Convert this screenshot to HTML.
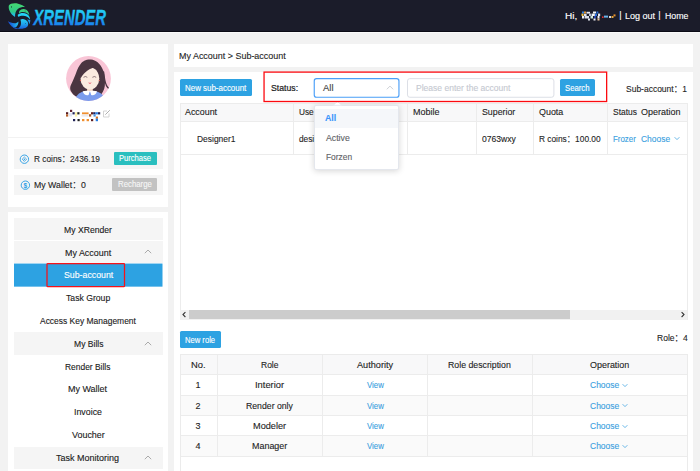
<!DOCTYPE html>
<html><head><meta charset="utf-8"><title>XRender - Sub-account</title>
<style>
*{box-sizing:border-box;margin:0;padding:0}
html,body{width:700px;height:471px;overflow:hidden;background:#f2f2f2;font-family:"Liberation Sans","Noto Sans CJK SC",sans-serif;color:#222;font-size:9px}
.a{position:absolute;white-space:nowrap}
.t{position:absolute;white-space:nowrap;line-height:12px;height:12px;-webkit-text-stroke:0.12px currentColor}
.c{text-align:center}
#hdr{left:0;top:0;width:700px;height:32px;background:#1b1c2a}
.panel{background:#fff}
.btn{background:#2da2e2;color:#fff;border-radius:1.5px;text-align:center}
.mi{left:14px;width:148.5px;height:22.2px;background:#f5f5f5;margin-top:-0.2px}
.ml{left:14px;width:148.5px;text-align:center;font-size:9.2px;color:#1a1a1a}
.th{background:#f8f8f9}
.ln{background:#ececec}
.lk{color:#3aa0e0}
.cn{font-family:"Noto Sans CJK SC",sans-serif}
</style></head><body>

<!-- header -->
<div class="a" id="hdr"></div>
<div class="a" style="left:0;top:30.8px;width:700px;height:1.2px;background:#0b0b15"></div>
<div class="a" style="left:0;top:32px;width:700px;height:1px;background:#fafafa"></div>
<svg class="a" style="left:6px;top:1px" width="26" height="30" viewBox="0 0 408 471">
 <defs>
  <linearGradient id="g1" x1="0" y1="40" x2="0" y2="255" gradientUnits="userSpaceOnUse"><stop offset="0" stop-color="#44d872"/><stop offset="0.6" stop-color="#2fc888"/><stop offset="0.8" stop-color="#22c0d8"/><stop offset="1" stop-color="#1eb0ee"/></linearGradient>
  <linearGradient id="g2" x1="0" y1="275" x2="0" y2="440" gradientUnits="userSpaceOnUse"><stop offset="0" stop-color="#2ad6f4"/><stop offset="0.5" stop-color="#1fa6ec"/><stop offset="1" stop-color="#1a5cdc"/></linearGradient>
  <linearGradient id="g4" x1="30" y1="0" x2="200" y2="0" gradientUnits="userSpaceOnUse"><stop offset="0" stop-color="#1846d2"/><stop offset="0.5" stop-color="#1c84e4"/><stop offset="1" stop-color="#25c8f0"/></linearGradient>
  <linearGradient id="g5" x1="0" y1="120" x2="0" y2="225" gradientUnits="userSpaceOnUse"><stop offset="0" stop-color="#40d47a"/><stop offset="1" stop-color="#2cc890"/></linearGradient>
 </defs>
 <path d="M45,72 C62,40 130,28 190,42 C240,54 280,75 302,98 C268,92 222,100 185,125 C155,150 140,195 142,250 C105,228 68,190 52,145 C42,118 40,92 45,72Z" fill="url(#g1)"/>
 <ellipse cx="86" cy="93" rx="8" ry="11" fill="#1a2430"/>
 <path d="M212,155 C232,128 280,112 318,138 C345,158 362,188 366,222 C335,185 290,168 250,174 C232,177 218,184 205,195 C204,180 206,166 212,155Z" fill="url(#g5)"/>
 <circle cx="300" cy="156" r="7" fill="#1d4a3c"/>
 <path d="M186,215 C215,190 275,180 328,203 C358,218 376,250 379,292 C352,252 312,232 268,230 C238,229 212,236 192,248 C184,236 183,225 186,215Z" fill="#23d2f5"/>
 <path d="M381,300 C383,322 378,345 366,364 C362,338 350,312 330,290 C348,290 366,294 381,300Z" fill="#1c96e8"/>
 <path d="M226,290 C262,272 310,285 337,320 C356,350 352,392 322,414 C290,436 235,444 188,432 C220,412 236,380 236,345 C236,325 232,306 226,290Z" fill="url(#g2)"/>
 <circle cx="305" cy="352" r="7" fill="#1b2c4c"/>
 <path d="M30,315 C55,335 95,350 135,350 C160,350 180,340 194,322 C198,350 186,385 160,408 C145,418 134,420 122,416 C80,395 45,360 30,315Z" fill="url(#g4)"/>
 <path d="M75,378 C112,412 165,434 222,438 C195,444 158,440 128,426 C104,414 86,398 75,378Z" fill="#1958da"/>
</svg>
<svg class="a" style="left:30px;top:4px" width="82" height="26" viewBox="0 0 82 26">
 <defs><linearGradient id="g3" x1="0" y1="5.6" x2="0" y2="20.7" gradientUnits="userSpaceOnUse"><stop offset="0" stop-color="#25cef5"/><stop offset="0.55" stop-color="#1ab8f2"/><stop offset="0.72" stop-color="#1a98f0"/><stop offset="1" stop-color="#1b86ee"/></linearGradient></defs>
 <text x="3.4" y="20.7" font-family="Liberation Sans, sans-serif" font-weight="bold" font-style="italic" font-size="21.2" textLength="72.6" lengthAdjust="spacingAndGlyphs" fill="url(#g3)" stroke="url(#g3)" stroke-width="0.35">XRENDER</text>
</svg>


<!-- header mosaic name -->
<svg class="a" style="left:580px;top:10px" width="37" height="12" viewBox="580 10 37 12">
<rect x="582" y="11.5" width="2" height="2" fill="#2d7fe0"/><rect x="584" y="11.5" width="2" height="2" fill="#e8962e"/>
<rect x="586.5" y="11.8" width="3.5" height="1.8" fill="#e9ecf4"/><rect x="593" y="11.5" width="3" height="2" fill="#f2f2f6"/><rect x="596.5" y="11.5" width="1.8" height="2" fill="#2a6fdc"/>
<rect x="581.5" y="13.6" width="2" height="2.4" fill="#f0c040"/><rect x="584" y="13.8" width="2.6" height="2.2" fill="#dfe3ee"/><rect x="589" y="13.6" width="2.6" height="2.4" fill="#b9c0d0"/>
<rect x="592" y="13.6" width="2.8" height="2.4" fill="#f4f4f8"/><rect x="595" y="13.6" width="2" height="2.4" fill="#2d6fd8"/><rect x="598" y="13.6" width="2.2" height="2.4" fill="#e6e8f0"/>
<rect x="582" y="16" width="2.4" height="2.5" fill="#eceef4"/><rect x="585" y="16" width="4" height="2.5" fill="#d9dde8"/><rect x="590.5" y="16" width="2.5" height="2.5" fill="#cfe8dc"/>
<rect x="594" y="16" width="2" height="2.5" fill="#2440a8"/><rect x="597.5" y="16" width="2" height="2.5" fill="#eef0f6"/>
<rect x="602" y="16.4" width="1.6" height="1.6" fill="#e03030"/><rect x="604" y="15.6" width="4" height="2" fill="#6ab4ea"/><rect x="609" y="16" width="2" height="2" fill="#d8d8e0"/>
<rect x="611.5" y="16" width="2" height="2" fill="#e8a83a"/><rect x="613.5" y="14.4" width="2" height="2" fill="#e8902a"/>
<rect x="588" y="18.5" width="2" height="2" fill="#e8eaf2"/><rect x="593.5" y="18.5" width="2" height="2" fill="#f0f0f6"/><rect x="597.5" y="18.5" width="2" height="2" fill="#efc8a0"/>
</svg>
<!-- sidebar cards -->
<div class="a panel" style="left:8.3px;top:44px;width:160.1px;height:92.7px"></div>
<div class="a panel" style="left:8.3px;top:138px;width:160.1px;height:68.7px"></div>
<div class="a panel" style="left:8.3px;top:212.4px;width:160.1px;height:260px"></div>


<!-- avatar -->
<svg class="a" style="left:65.8px;top:55.6px" width="45" height="45" viewBox="0 0 45 45">
 <defs><clipPath id="cp"><circle cx="22.5" cy="22.5" r="22.4"/></clipPath></defs>
 <circle cx="22.5" cy="22.5" r="22.4" fill="#f9c5d6"/>
 <g clip-path="url(#cp)">
  <path d="M25 3.4 C19.5 3.2 16.5 5.5 15 7.4 C12.5 10.5 11.5 13 10.6 15.5 C9.5 18.8 8.6 21 7.2 24 C6 27 4.8 28.8 4.3 30.8 C4 32.5 4.3 34 5 35.2 C6 37.3 7.8 39 10 40.6 L34 40 C36.2 37.5 38.3 34 38.8 30 C39.4 25 38.8 19 37.2 14.5 C35.8 10.8 34 8.4 31.6 6.3 C29.6 4.6 27.6 3.6 25 3.4Z" fill="#4a3541"/>
  <path d="M37.6 16 C38.2 22 39 26.5 40.5 29.6 C41.5 31.6 42.6 32.7 44 33.4" stroke="#4a3541" stroke-width="1.3" fill="none" stroke-linecap="round"/>
  <path d="M21.1 30 H26.8 V36.5 H21.1Z" fill="#f4d6c3"/>
  <ellipse cx="23.9" cy="22.4" rx="9.4" ry="11" fill="#fbebe0"/>
  <path d="M28.6 11.3 C24.5 12.4 18.8 14.8 14.4 22.8 C13.3 17 16 12 21 10.3 C24 9.6 27 10.2 28.6 11.3Z M28.6 11.3 C31 13.2 32.8 16.5 33.4 21.5 C34 17 32.6 13 30 11Z" fill="#4a3541"/>
  <path d="M8.8 45 C9.6 40 13 36.6 17.5 35.6 L30.5 35.6 C35 36.6 38.6 40 39.4 45Z" fill="#7b9ced"/>
  <path d="M16.7 35.3 C18.5 34.6 21 34.4 23.9 35 L22.6 39 C20.2 39.8 17.5 38.5 16.7 35.3Z M31 35.3 C29.2 34.6 26.8 34.4 23.9 35 L25.2 39 C27.6 39.8 30.2 38.5 31 35.3Z" fill="#fff"/>
  <path d="M17.5 21.3 q1.9 -1.6 3.8 0 M26.4 21.3 q1.9 -1.6 3.8 0" stroke="#5a4048" stroke-width="0.65" fill="none"/>
  <path d="M22.2 26.6 q1.7 2.4 3.5 0 q-1.7 0.5 -3.5 0Z" fill="#ea4e62"/>
  <circle cx="14.5" cy="24.6" r="0.7" fill="#ea6a5a"/><circle cx="33.3" cy="24.6" r="0.7" fill="#ea6a5a"/>
 </g>
</svg>
<!-- mosaic name -->
<svg class="a" style="left:64px;top:108px" width="50" height="15" viewBox="64 108 50 15">
 <g opacity="0.95">
 <rect x="70" y="109.8" width="2.2" height="2.2" fill="#5a1620"/>
 <rect x="66" y="112.2" width="2.2" height="2.2" fill="#4a1018"/><rect x="66" y="114.4" width="2.2" height="2.2" fill="#b5581c"/>
 <rect x="69" y="113" width="3" height="3.4" fill="#dfe3f4"/>
 <rect x="72.5" y="112.2" width="2.2" height="2.2" fill="#15184e"/>
 <rect x="75" y="112.2" width="2.2" height="4.4" fill="#fdf3a8"/>
 <rect x="77.3" y="112.2" width="2.2" height="2.2" fill="#141414"/>
 <rect x="82" y="112.4" width="6.6" height="1.9" fill="#f08a24"/>
 <rect x="81.5" y="114.6" width="7" height="2" fill="#ece8ea"/>
 <rect x="89" y="114.2" width="2.2" height="2.4" fill="#a7501c"/>
 <rect x="91" y="112.2" width="2.2" height="2.2" fill="#5a1414"/>
 <rect x="93.2" y="112.2" width="2.3" height="2.2" fill="#191a55"/>
 <rect x="95.5" y="112.2" width="2.4" height="2.2" fill="#1d78e0"/>
 <rect x="98" y="112.2" width="2.2" height="2.2" fill="#15164a"/>
 <rect x="93.5" y="114.4" width="2.2" height="2.2" fill="#3b8fe8"/>
 <rect x="95.8" y="116.6" width="2.2" height="2.2" fill="#d46a1c"/>
 <rect x="73" y="119" width="2.2" height="2.2" fill="#15184e"/>
 <rect x="77.5" y="119" width="2.2" height="2.2" fill="#141414"/>
 <rect x="82" y="119" width="2.4" height="2.2" fill="#f08a24"/>
 <rect x="86.6" y="119" width="2.4" height="2.2" fill="#f08a24"/>
 <rect x="91" y="119" width="2.2" height="2.2" fill="#5a1414"/>
 <rect x="95.7" y="118.6" width="2.3" height="2.6" fill="#1d78e0"/>
 </g>
 <path d="M107 111 H103.5 V117 H109 V113.5" stroke="#cfcfcf" stroke-width="0.9" fill="none"/>
 <path d="M105.3 114.7 L109.8 110.2" stroke="#b0b0b0" stroke-width="1"/>
</svg>
<!-- coins rows -->
<div class="a" style="left:14px;top:149px;width:148.7px;height:20px;background:#f5f5f5"></div>
<div class="a" style="left:14px;top:175px;width:148.7px;height:20.3px;background:#f5f5f5"></div>
<svg class="a" style="left:19.1px;top:154.1px" width="11" height="11" viewBox="0 0 11 11"><circle cx="5.4" cy="5.2" r="4.2" fill="none" stroke="#2f9fe4" stroke-width="0.95"/><path d="M5.4 3 L7.6 5.2 L5.4 7.4 L3.2 5.2Z" fill="none" stroke="#2f9fe4" stroke-width="0.8"/><circle cx="5.4" cy="5.2" r="0.7" fill="#2f9fe4"/></svg>
<svg class="a" style="left:19.9px;top:180.1px" width="11" height="11" viewBox="0 0 11 11"><circle cx="5.4" cy="5.2" r="4.2" fill="none" stroke="#2f9fe4" stroke-width="0.95"/><text x="5.4" y="7.6" font-size="6.6" font-weight="bold" font-family="Liberation Sans, sans-serif" text-anchor="middle" fill="#2f9fe4">$</text></svg>
<div class="a" style="left:113.8px;top:152px;width:43px;height:12.8px;background:#2abfbf;border-radius:1px"></div>
<div class="a" style="left:112.4px;top:178.4px;width:44.4px;height:12.4px;background:#c2c2c2;border-radius:1px"></div>
<!-- menu -->
<div class="a mi" style="top:218.4px"></div>
<div class="a mi" style="top:241.2px"></div>
<svg class="a" style="left:144px;top:249.2px" width="8" height="5" viewBox="0 0 8 5"><path d="M0.8 4.2 L4 1 L7.2 4.2" fill="none" stroke="#9c9c9c" stroke-width="0.85"/></svg>
<svg class="a" style="left:14px;top:263px" width="149" height="24" viewBox="0 0 149 24"><rect x="0" y="0.55" width="148.5" height="23.1" fill="#2da2e2"/></svg>
<div class="a mi" style="top:332.6px"></div>
<svg class="a" style="left:144px;top:340.6px" width="8" height="5" viewBox="0 0 8 5"><path d="M0.8 4.2 L4 1 L7.2 4.2" fill="none" stroke="#9c9c9c" stroke-width="0.85"/></svg>
<div class="a mi" style="top:446.7px"></div>
<svg class="a" style="left:144px;top:454.7px" width="8" height="5" viewBox="0 0 8 5"><path d="M0.8 4.2 L4 1 L7.2 4.2" fill="none" stroke="#9c9c9c" stroke-width="0.85"/></svg>

<!-- main panels -->
<div class="a panel" style="left:174px;top:44px;width:519px;height:22.8px"></div>
<div class="a panel" style="left:174px;top:72px;width:519px;height:400px"></div>



<!-- toolbar -->
<div class="a btn" style="left:180px;top:79.2px;width:72px;height:17px"></div>
<svg class="a" style="left:0;top:0" width="700" height="471" viewBox="0 0 700 471"><rect x="314.25" y="78.65" width="84.7" height="18.6" rx="2.3" fill="#fff" stroke="#4a9ff8" stroke-width="1.15"/><rect x="407.5" y="78.65" width="146.4" height="18.6" rx="2.3" fill="#fff" stroke="#dcdfe6" stroke-width="1"/></svg>
<svg class="a" style="left:386px;top:85.3px" width="8" height="5" viewBox="0 0 8 5"><path d="M0.8 4.3 L4 1.1 L7.2 4.3" fill="none" stroke="#c0c4cc" stroke-width="0.8"/></svg>
<div class="a btn" style="left:559.7px;top:79.2px;width:35.3px;height:17.1px"></div>
<!-- table 1 -->
<div class="a" style="left:179.6px;top:102.6px;width:508.2px;height:217px;border:1px solid #ececec;border-bottom:none"></div>
<div class="a th" style="left:180.6px;top:103.6px;width:506.2px;height:17.6px"></div>
<div class="a ln" style="left:180.6px;top:121.1px;width:506.2px;height:0.9px"></div>
<div class="a ln" style="left:180.6px;top:153.6px;width:506.2px;height:0.9px"></div>
<div class="a ln" style="left:293.4px;top:103.6px;width:0.9px;height:50.4px"></div>
<div class="a ln" style="left:407.1px;top:103.6px;width:0.9px;height:50.4px"></div>
<div class="a ln" style="left:476px;top:103.6px;width:0.9px;height:50.4px"></div>
<div class="a ln" style="left:533.1px;top:103.6px;width:0.9px;height:50.4px"></div>
<div class="a ln" style="left:607.1px;top:103.6px;width:0.9px;height:50.4px"></div>
<svg class="a" style="left:672.5px;top:136.3px" width="8" height="5" viewBox="0 0 8 5"><path d="M1.6 1.2 L4 3.6 L6.4 1.2" fill="none" stroke="#3aa0e0" stroke-width="0.75"/></svg>
<!-- scrollbar -->
<div class="a" style="left:180.2px;top:310.1px;width:506.8px;height:9.6px;background:#f1f1f1"></div>
<div class="a" style="left:189.4px;top:310.3px;width:380.8px;height:9px;background:#cccccc"></div>
<svg class="a" style="left:181.2px;top:311.3px" width="6" height="7" viewBox="0 0 6 7"><path d="M4.4 1.2 L2 3.6 L4.4 6" fill="none" stroke="#333" stroke-width="1.1"/></svg>
<svg class="a" style="left:680px;top:311.3px" width="6" height="7" viewBox="0 0 6 7"><path d="M1.6 1.2 L4 3.6 L1.6 6" fill="none" stroke="#333" stroke-width="1.1"/></svg>
<!-- dropdown -->
<div class="a" style="left:313.9px;top:104.7px;width:85.6px;height:65.8px;background:#fff;border:1px solid #e4e7ed;border-radius:2px;box-shadow:0 1px 6px rgba(0,0,0,0.17)"></div>
<div class="a" style="left:315.3px;top:108.6px;width:83px;height:19.2px;background:#f5f7fa"></div>
<svg class="a" style="left:333.2px;top:101.4px" width="9" height="4.4" viewBox="0 0 9 4.4"><path d="M0.3 4.4 L4.5 0.6 L8.7 4.4Z" fill="#fff" stroke="#e6e9f0" stroke-width="0.7"/></svg>
<!-- red annotation -->
<svg class="a" style="left:0;top:0;z-index:6" width="700" height="471" viewBox="0 0 700 471"><rect x="264.05" y="72.1" width="342.6" height="29.4" fill="none" stroke="#fc0a10" stroke-width="1.3"/><rect x="47" y="263.5" width="77.5" height="23.2" rx="0.8" fill="none" stroke="#f5121a" stroke-width="1.25"/></svg>
<!-- role section -->
<div class="a btn" style="left:180px;top:331.2px;width:41px;height:17.1px"></div>
<div class="a" style="left:179.6px;top:354.2px;width:508.2px;height:120px;border:1px solid #ebebeb;border-bottom:none"></div>
<div class="a th" style="left:180.6px;top:355.2px;width:506.2px;height:19.2px"></div>
<div class="a" style="left:180.6px;top:394.8px;width:506.2px;height:20.4px;background:#fafafa"></div>
<div class="a" style="left:180.6px;top:435.7px;width:506.2px;height:20.4px;background:#fafafa"></div>
<div class="a ln" style="left:180.6px;top:374.1px;width:506.2px;height:0.9px"></div>
<div class="a ln" style="left:180.6px;top:394.5px;width:506.2px;height:0.9px"></div>
<div class="a ln" style="left:180.6px;top:414.9px;width:506.2px;height:0.9px"></div>
<div class="a ln" style="left:180.6px;top:435.4px;width:506.2px;height:0.9px"></div>
<div class="a ln" style="left:180.6px;top:455.8px;width:506.2px;height:0.9px"></div>
<div class="a ln" style="left:216.6px;top:355px;width:0.9px;height:101.5px"></div>
<div class="a ln" style="left:322.2px;top:355px;width:0.9px;height:101.5px"></div>
<div class="a ln" style="left:427.2px;top:355px;width:0.9px;height:101.5px"></div>
<div class="a ln" style="left:532.2px;top:355px;width:0.9px;height:101.5px"></div>
<svg class="a" style="left:621.3px;top:382.9px" width="8" height="5" viewBox="0 0 8 5"><path d="M1.6 1.2 L4 3.6 L6.4 1.2" fill="none" stroke="#3aa0e0" stroke-width="0.75"/></svg>
<svg class="a" style="left:621.3px;top:403.3px" width="8" height="5" viewBox="0 0 8 5"><path d="M1.6 1.2 L4 3.6 L6.4 1.2" fill="none" stroke="#3aa0e0" stroke-width="0.75"/></svg>
<svg class="a" style="left:621.3px;top:423.8px" width="8" height="5" viewBox="0 0 8 5"><path d="M1.6 1.2 L4 3.6 L6.4 1.2" fill="none" stroke="#3aa0e0" stroke-width="0.75"/></svg>
<svg class="a" style="left:621.3px;top:444.2px" width="8" height="5" viewBox="0 0 8 5"><path d="M1.6 1.2 L4 3.6 L6.4 1.2" fill="none" stroke="#3aa0e0" stroke-width="0.75"/></svg>
<div class="t" style="left:564.6px;top:9.7px;font-size:9px;color:#fff;transform:scaleX(1.1182);transform-origin:0 50%;">Hi,</div>
<div class="t" style="left:619.2px;top:9.3px;font-size:9px;color:#fff;transform:scaleX(1.0000);transform-origin:0 50%;">|</div>
<div class="t" style="left:625.0px;top:9.7px;font-size:9px;color:#fff;transform:scaleX(1.0023);transform-origin:0 50%;">Log out</div>
<div class="t" style="left:658.2px;top:9.3px;font-size:9px;color:#fff;transform:scaleX(1.0000);transform-origin:0 50%;">|</div>
<div class="t" style="left:664.9px;top:9.7px;font-size:9px;color:#fff;transform:scaleX(0.9785);transform-origin:0 50%;">Home</div>
<div class="t" style="left:179.2px;top:50.0px;font-size:9.6px;color:#1f1f1f;transform:scaleX(0.9328);transform-origin:0 50%;">My Account &gt; Sub-account</div>
<div class="t" style="left:33.6px;top:152.9px;font-size:9px;color:#1f1f1f;transform:scaleX(0.9207);transform-origin:0 50%;">R coins<span class="cn">：</span>2436.19</div>
<div class="t" style="left:33.6px;top:178.9px;font-size:9px;color:#1f1f1f;transform:scaleX(0.9736);transform-origin:0 50%;">My Wallet<span class="cn">：</span>0</div>
<div class="t" style="left:119.3px;top:153.0px;font-size:8.2px;color:#fff;transform:scaleX(0.9279);transform-origin:0 50%;">Purchase</div>
<div class="t" style="left:117.5px;top:179.2px;font-size:8.2px;color:#f6f6f6;transform:scaleX(0.9545);transform-origin:0 50%;">Recharge</div>
<div class="t" style="left:64.4px;top:223.9px;font-size:9.3px;color:#1a1a1a;transform:scaleX(0.9289);transform-origin:0 50%;">My XRender</div>
<div class="t" style="left:65.0px;top:246.7px;font-size:9.3px;color:#1a1a1a;transform:scaleX(0.9612);transform-origin:0 50%;">My Account</div>
<div class="t" style="left:63.5px;top:269.0px;font-size:9.3px;color:#fff;transform:scaleX(0.9425);transform-origin:0 50%;">Sub-account</div>
<div class="t" style="left:66.1px;top:291.8px;font-size:9.3px;color:#1a1a1a;transform:scaleX(0.9296);transform-origin:0 50%;">Task Group</div>
<div class="t" style="left:40.3px;top:315.1px;font-size:9.3px;color:#1a1a1a;transform:scaleX(0.9097);transform-origin:0 50%;">Access Key Management</div>
<div class="t" style="left:73.5px;top:338.2px;font-size:9.3px;color:#1a1a1a;transform:scaleX(0.9210);transform-origin:0 50%;">My Bills</div>
<div class="t" style="left:65.4px;top:360.9px;font-size:9.3px;color:#1a1a1a;transform:scaleX(0.9057);transform-origin:0 50%;">Render Bills</div>
<div class="t" style="left:68.4px;top:383.4px;font-size:9.3px;color:#1a1a1a;transform:scaleX(0.9662);transform-origin:0 50%;">My Wallet</div>
<div class="t" style="left:74.1px;top:405.9px;font-size:9.3px;color:#1a1a1a;transform:scaleX(0.9502);transform-origin:0 50%;">Invoice</div>
<div class="t" style="left:71.7px;top:428.8px;font-size:9.3px;color:#1a1a1a;transform:scaleX(0.9612);transform-origin:0 50%;">Voucher</div>
<div class="t" style="left:56.4px;top:452.0px;font-size:9.3px;color:#1a1a1a;transform:scaleX(0.9691);transform-origin:0 50%;">Task Monitoring</div>
<div class="t" style="left:185.2px;top:81.5px;font-size:8.6px;color:#fff;transform:scaleX(0.9231);transform-origin:0 50%;">New sub-account</div>
<div class="t" style="left:271.2px;top:82.0px;font-size:9.3px;color:#1a1a1a;-webkit-text-stroke:0.2px #1a1a1a;transform:scaleX(0.9360);transform-origin:0 50%;">Status:</div>
<div class="t" style="left:322.6px;top:81.9px;font-size:9px;color:#444;transform:scaleX(1.0484);transform-origin:0 50%;">All</div>
<div class="t" style="left:415.9px;top:81.9px;font-size:9px;color:#c5c9d1;transform:scaleX(0.9490);transform-origin:0 50%;">Please enter the account</div>
<div class="t" style="left:565.3px;top:81.5px;font-size:8.6px;color:#fff;transform:scaleX(0.8996);transform-origin:0 50%;">Search</div>
<div class="t" style="left:625.8px;top:82.4px;font-size:9.2px;color:#1f1f1f;transform:scaleX(0.9240);transform-origin:0 50%;">Sub-account<span class="cn">：</span>1</div>
<div class="t" style="left:184.6px;top:106.0px;font-size:9px;color:#1f1f1f;transform:scaleX(0.9867);transform-origin:0 50%;">Account</div>
<div class="t" style="left:299.2px;top:106.0px;font-size:9px;color:#1f1f1f;transform:scaleX(0.9179);transform-origin:0 50%;">Use</div>
<div class="t" style="left:413.3px;top:106.0px;font-size:9px;color:#1f1f1f;transform:scaleX(0.9994);transform-origin:0 50%;">Mobile</div>
<div class="t" style="left:481.5px;top:106.0px;font-size:9px;color:#1f1f1f;transform:scaleX(0.9785);transform-origin:0 50%;">Superior</div>
<div class="t" style="left:538.5px;top:106.0px;font-size:9px;color:#1f1f1f;transform:scaleX(0.9906);transform-origin:0 50%;">Quota</div>
<div class="t" style="left:612.6px;top:106.0px;font-size:9px;color:#1f1f1f;transform:scaleX(0.9406);transform-origin:0 50%;">Status</div>
<div class="t" style="left:641.3px;top:106.0px;font-size:9px;color:#1f1f1f;transform:scaleX(0.9967);transform-origin:0 50%;">Operation</div>
<div class="t" style="left:197.0px;top:132.5px;font-size:9px;color:#1f1f1f;transform:scaleX(0.9383);transform-origin:0 50%;">Designer1</div>
<div class="t" style="left:299.2px;top:132.5px;font-size:9px;color:#1f1f1f;transform:scaleX(0.9203);transform-origin:0 50%;">desi</div>
<div class="t" style="left:481.5px;top:132.5px;font-size:9px;color:#1f1f1f;transform:scaleX(0.9513);transform-origin:0 50%;">0763wxy</div>
<div class="t" style="left:538.5px;top:132.5px;font-size:9px;color:#1f1f1f;transform:scaleX(0.9254);transform-origin:0 50%;">R coins<span class="cn">：</span>100.00</div>
<div class="t" style="left:613.3px;top:132.5px;font-size:9px;color:#3aa0e0;transform:scaleX(0.8764);transform-origin:0 50%;">Frozer</div>
<div class="t" style="left:641.3px;top:132.5px;font-size:9px;color:#3aa0e0;transform:scaleX(0.9378);transform-origin:0 50%;">Choose</div>
<div class="t" style="left:325.4px;top:112.1px;font-size:9px;color:#3a96fb;font-weight:bold;z-index:5;transform:scaleX(0.9726);transform-origin:0 50%;">All</div>
<div class="t" style="left:325.6px;top:131.5px;font-size:9px;color:#606266;z-index:5;transform:scaleX(0.9708);transform-origin:0 50%;">Active</div>
<div class="t" style="left:325.6px;top:150.9px;font-size:9px;color:#606266;z-index:5;transform:scaleX(0.9316);transform-origin:0 50%;">Forzen</div>
<div class="t" style="left:185.0px;top:333.6px;font-size:8.6px;color:#fff;transform:scaleX(0.8873);transform-origin:0 50%;">New role</div>
<div class="t" style="left:656.6px;top:331.3px;font-size:9.2px;color:#1f1f1f;transform:scaleX(0.9272);transform-origin:0 50%;">Role<span class="cn">：</span>4</div>
<div class="t" style="left:190.9px;top:359.3px;font-size:9px;color:#1f1f1f;transform:scaleX(1.0417);transform-origin:0 50%;">No.</div>
<div class="t" style="left:260.8px;top:359.3px;font-size:9px;color:#1f1f1f;transform:scaleX(0.9451);transform-origin:0 50%;">Role</div>
<div class="t" style="left:356.6px;top:359.3px;font-size:9px;color:#1f1f1f;transform:scaleX(1.0160);transform-origin:0 50%;">Authority</div>
<div class="t" style="left:448.1px;top:359.3px;font-size:9px;color:#1f1f1f;transform:scaleX(0.9729);transform-origin:0 50%;">Role description</div>
<div class="t" style="left:589.6px;top:359.3px;font-size:9px;color:#1f1f1f;transform:scaleX(0.9942);transform-origin:0 50%;">Operation</div>
<div class="t" style="left:195.4px;top:378.5px;font-size:9px;color:#1f1f1f;transform:scaleX(1.0000);transform-origin:0 50%;">1</div>
<div class="t" style="left:254.8px;top:378.5px;font-size:9px;color:#1f1f1f;transform:scaleX(1.0387);transform-origin:0 50%;">Interior</div>
<div class="t" style="left:366.6px;top:378.5px;font-size:9px;color:#3aa0e0;transform:scaleX(0.8678);transform-origin:0 50%;">View</div>
<div class="t" style="left:590.1px;top:378.5px;font-size:9px;color:#3aa0e0;transform:scaleX(0.9442);transform-origin:0 50%;">Choose</div>
<div class="t" style="left:195.4px;top:399.5px;font-size:9px;color:#1f1f1f;transform:scaleX(1.0000);transform-origin:0 50%;">2</div>
<div class="t" style="left:245.9px;top:399.5px;font-size:9px;color:#1f1f1f;transform:scaleX(0.9664);transform-origin:0 50%;">Render only</div>
<div class="t" style="left:366.6px;top:399.5px;font-size:9px;color:#3aa0e0;transform:scaleX(0.8678);transform-origin:0 50%;">View</div>
<div class="t" style="left:590.1px;top:399.5px;font-size:9px;color:#3aa0e0;transform:scaleX(0.9442);transform-origin:0 50%;">Choose</div>
<div class="t" style="left:195.4px;top:420.0px;font-size:9px;color:#1f1f1f;transform:scaleX(1.0000);transform-origin:0 50%;">3</div>
<div class="t" style="left:253.0px;top:420.0px;font-size:9px;color:#1f1f1f;transform:scaleX(1.0180);transform-origin:0 50%;">Modeler</div>
<div class="t" style="left:366.6px;top:420.0px;font-size:9px;color:#3aa0e0;transform:scaleX(0.8678);transform-origin:0 50%;">View</div>
<div class="t" style="left:590.1px;top:420.0px;font-size:9px;color:#3aa0e0;transform:scaleX(0.9442);transform-origin:0 50%;">Choose</div>
<div class="t" style="left:195.4px;top:439.8px;font-size:9px;color:#1f1f1f;transform:scaleX(1.0000);transform-origin:0 50%;">4</div>
<div class="t" style="left:251.9px;top:439.8px;font-size:9px;color:#1f1f1f;transform:scaleX(0.9935);transform-origin:0 50%;">Manager</div>
<div class="t" style="left:366.6px;top:439.8px;font-size:9px;color:#3aa0e0;transform:scaleX(0.8678);transform-origin:0 50%;">View</div>
<div class="t" style="left:590.1px;top:439.8px;font-size:9px;color:#3aa0e0;transform:scaleX(0.9442);transform-origin:0 50%;">Choose</div>
</body></html>
